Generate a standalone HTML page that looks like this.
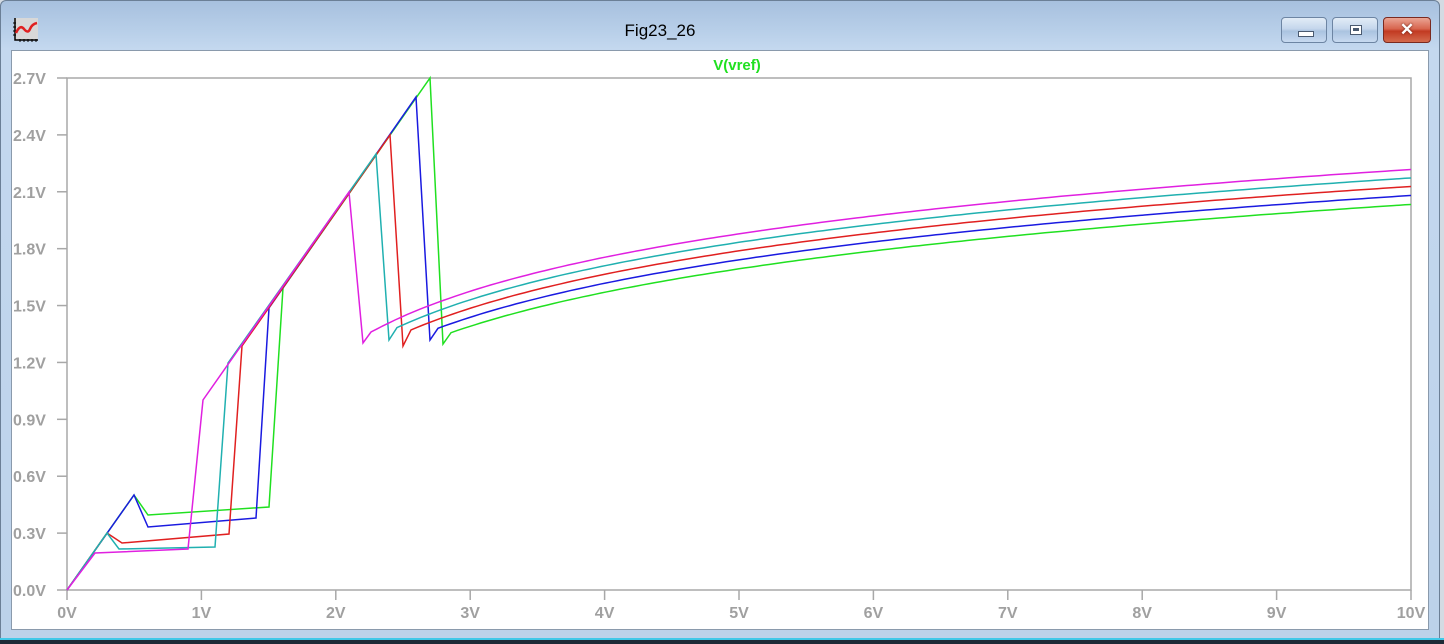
<!DOCTYPE html>
<html><head><meta charset="utf-8">
<style>
html,body{margin:0;padding:0;width:1444px;height:644px;overflow:hidden;background:#d4dbe3;font-family:"Liberation Sans",sans-serif}
#win{position:absolute;left:0;top:0;width:1440px;height:640px;border-radius:6px 6px 0 0;background:linear-gradient(#a7c0de 0px,#b8cfe9 30px,#c4d8ef 48px,#bcd2ea 100%);border:1px solid #6b7f96;box-sizing:border-box}
#client{position:absolute;left:10px;top:49px;width:1418px;height:580px;background:#fff;border:1px solid #8a9aac;box-sizing:border-box}
.btn{position:absolute;top:16px;height:26px;border:1px solid #6d85a3;border-radius:4px;box-sizing:border-box;background:linear-gradient(#e2ecf7,#c4d6ec 45%,#aac3e0 55%,#c8daf0)}
#bot{position:absolute;left:0;top:638px;width:1444px;height:2px;background:#40c8e8}
#bot2{position:absolute;left:0;top:640px;width:1444px;height:4px;background:#1d2a36}
</style></head><body>
<div id="win">
  <svg style="position:absolute;left:11px;top:14px" width="28" height="28" viewBox="0 0 28 28">
    <rect x="2" y="3" width="24" height="22" fill="#d8d8d8"/>
    <path d="M3 3V25H26" stroke="#000" stroke-width="1.5" fill="none"/>
    <path d="M1 8H4M1 12H4M1 16H4M1 20H4M8 24V27M12 24V27M16 24V27M20 24V27M24 24V27" stroke="#000" stroke-width="1"/>
    <path d="M4 18Q8 9 12 14T18 14T25 8" stroke="#e02020" stroke-width="2.5" fill="none"/>
  </svg>
  <div style="position:absolute;left:0;width:1318px;top:20px;text-align:center;font-size:17px;color:#000">Fig23_26</div>
  <div class="btn" style="left:1280px;width:46px"><div style="position:absolute;left:16px;top:13px;width:14px;height:4px;background:#fff;border:1px solid #4a5a70"></div></div>
  <div class="btn" style="left:1331px;width:46px"><div style="position:absolute;left:17px;top:7px;width:10px;height:8px;background:#fff;border:1px solid #4a5a70"><div style="margin:2px;height:3px;background:#4a5a70"></div></div></div>
  <div class="btn" style="left:1382px;width:48px;border-color:#7a2a20;background:linear-gradient(#eba594,#d7654e 45%,#c23a22 55%,#d46a4d)"><div style="position:absolute;left:0;width:46px;top:2px;text-align:center;color:#fff;font-weight:bold;font-size:17px;text-shadow:0 0 2px #5a1a10">✕</div></div>
  <div id="client"></div>
</div>
<svg id="plot" style="position:absolute;left:0;top:0" width="1444" height="644">
  <g stroke="#a8a8a8" stroke-width="1.5" fill="none" id="axes"></g>
  <g font-family="Liberation Sans, sans-serif" font-size="16" fill="#a0a0a0" font-weight="bold" id="labels"></g>
  <text x="737" y="70" text-anchor="middle" fill="#20e020" font-size="15" font-weight="bold" font-family="Liberation Sans, sans-serif">V(vref)</text>
  <g fill="none" stroke-width="1.5" id="traces"></g>
</svg>
<div id="bot"></div><div id="bot2"></div>
<script>
var ns="http://www.w3.org/2000/svg";
function el(p,t,a,txt){var e=document.createElementNS(ns,t);for(var k in a)e.setAttribute(k,a[k]);if(txt)e.textContent=txt;p.appendChild(e);return e;}
var ax=document.getElementById('axes'),lb=document.getElementById('labels'),tr=document.getElementById('traces');
el(ax,'rect',{x:67,y:78,width:1344,height:512});
for(var i=0;i<=9;i++){var y=590-i*56.89;el(ax,'line',{x1:57,y1:y,x2:67,y2:y});
 el(lb,'text',{x:13,y:y+6},(i*0.3).toFixed(1)+'V');}
for(var j=0;j<=10;j++){var x=67+j*134.4;el(ax,'line',{x1:x,y1:590,x2:x,y2:600});
 el(lb,'text',{x:x,y:618,'text-anchor':'middle'},j+'V');}
function curve(off,x0){var s='';for(var x=x0;x<=1411;x+=6){s+=' '+x+','+(309-76.5*(Math.log(x-230)-5.25)+off).toFixed(1);}
 s+=' 1411,'+(309-76.5*(Math.log(1181)-5.25)+off).toFixed(1);return s;}
var T=[
 ['#20e020','67,590 134,495 148,515 269,507 283,288 430,78 443,344',35,451],
 ['#1a1ae0','67,590 134,495 148,527 256,518 269,308 416,97 430,340',26,438],
 ['#e02020','67,590 107,533 122,543 229,534 242,346 390,135 403,346',17,411],
 ['#20b0b0','67,590 107,533 119,549 215,547 228,363 376,154 389,340',8.5,397],
 ['#e020e0','67,590 95,553 188,549 203,400 349,192 363,343',0,371]];
T.forEach(function(t){el(tr,'polyline',{stroke:t[0],points:t[1]+curve(t[2],t[3])});});
</script>
</body></html>
